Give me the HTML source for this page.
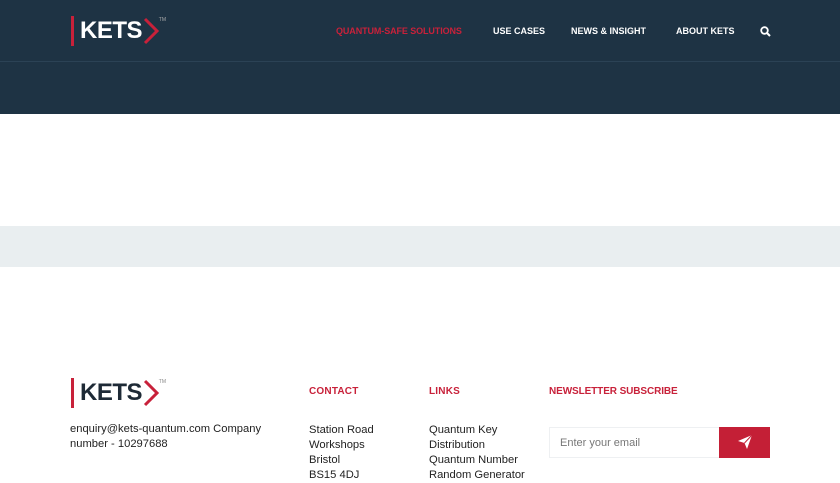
<!DOCTYPE html>
<html><head><meta charset="utf-8"><style>
*{margin:0;padding:0;box-sizing:border-box}
body{width:840px;height:472px;overflow:hidden;background:#fff;font-family:"Liberation Sans",sans-serif;position:relative}
.hdr{position:absolute;left:0;top:0;width:840px;height:114px;background:#1e3344}
.hline{position:absolute;left:0;top:61px;width:840px;height:1px;background:#2b4255}
.logo{position:absolute;display:flex;align-items:center}
.logo .bar{width:3px;height:30px;background:#c8213a;margin-right:6px}
.logo .t{font-weight:bold;font-size:24px;letter-spacing:-0.5px}
.logo .tm{font-size:5px;position:absolute;right:-6px;top:1px}
.nav{position:absolute;top:26px;font-size:9px;font-weight:bold;color:#fff;letter-spacing:0}
.grey{position:absolute;left:0;top:226px;width:840px;height:41px;background:#e9eef0}
.h{position:absolute;top:386px;font-size:10px;font-weight:bold;color:#c8213a;letter-spacing:.2px}
.p{position:absolute;font-size:11.2px;line-height:15px;color:#222}
</style></head><body>
<div class="hdr"></div><div class="hline"></div>
<div class="logo" style="left:71px;top:16px;color:#fff">
<div class="bar"></div><span class="t">KETS</span>
<svg width="17" height="30" viewBox="0 0 17 30" style="margin-left:1px"><path d="M2 3 L14 15 L2 27" fill="none" stroke="#c8213a" stroke-width="3"/></svg>
<span class="tm" style="color:#aaa">TM</span></div>
<div class="nav" style="left:336px;color:#c8213a;letter-spacing:-0.1px">QUANTUM-SAFE SOLUTIONS</div>
<div class="nav" style="left:493px">USE CASES</div>
<div class="nav" style="left:571px">NEWS &amp; INSIGHT</div>
<div class="nav" style="left:676px">ABOUT KETS</div>
<svg style="position:absolute;left:760px;top:26px" width="11" height="11" viewBox="0 0 11 11"><circle cx="4.5" cy="4.5" r="3.3" fill="none" stroke="#fff" stroke-width="1.8"/><path d="M7 7 L10 10" stroke="#fff" stroke-width="2"/></svg>
<div class="grey"></div>
<div class="logo" style="left:71px;top:378px;color:#1e2a36">
<div class="bar"></div><span class="t">KETS</span>
<svg width="17" height="30" viewBox="0 0 17 30" style="margin-left:1px"><path d="M2 3 L14 15 L2 27" fill="none" stroke="#c8213a" stroke-width="3"/></svg>
<span class="tm" style="color:#888">TM</span></div>
<div class="p" style="left:70px;top:422px;width:195px">enquiry@kets-quantum.com Company number - 10297688</div>
<div class="h" style="left:309px">CONTACT</div>
<div class="h" style="left:429px">LINKS</div>
<div class="h" style="left:549px;letter-spacing:-0.1px">NEWSLETTER SUBSCRIBE</div>
<div class="p" style="left:309px;top:423px">Station Road<br>Workshops<br>Bristol<br>BS15 4DJ</div>
<div class="p" style="left:429px;top:423px">Quantum Key<br>Distribution<br>Quantum Number<br>Random Generator</div>
<div style="position:absolute;left:549px;top:427px;width:171px;height:31px;border:1px solid #eef0f2;font-size:11px;color:#777;padding:9px 10px">Enter your email</div>
<div style="position:absolute;left:719px;top:427px;width:51px;height:31px;background:#c41f36"></div>
<svg style="position:absolute;left:737px;top:434px" width="16" height="16" viewBox="0 0 16 16"><path d="M1 7 L15 1 L10 15 L7.5 9 Z" fill="#fff"/><path d="M7.5 9 L15 1" stroke="#c41f36" stroke-width="1"/></svg>
</body></html>
